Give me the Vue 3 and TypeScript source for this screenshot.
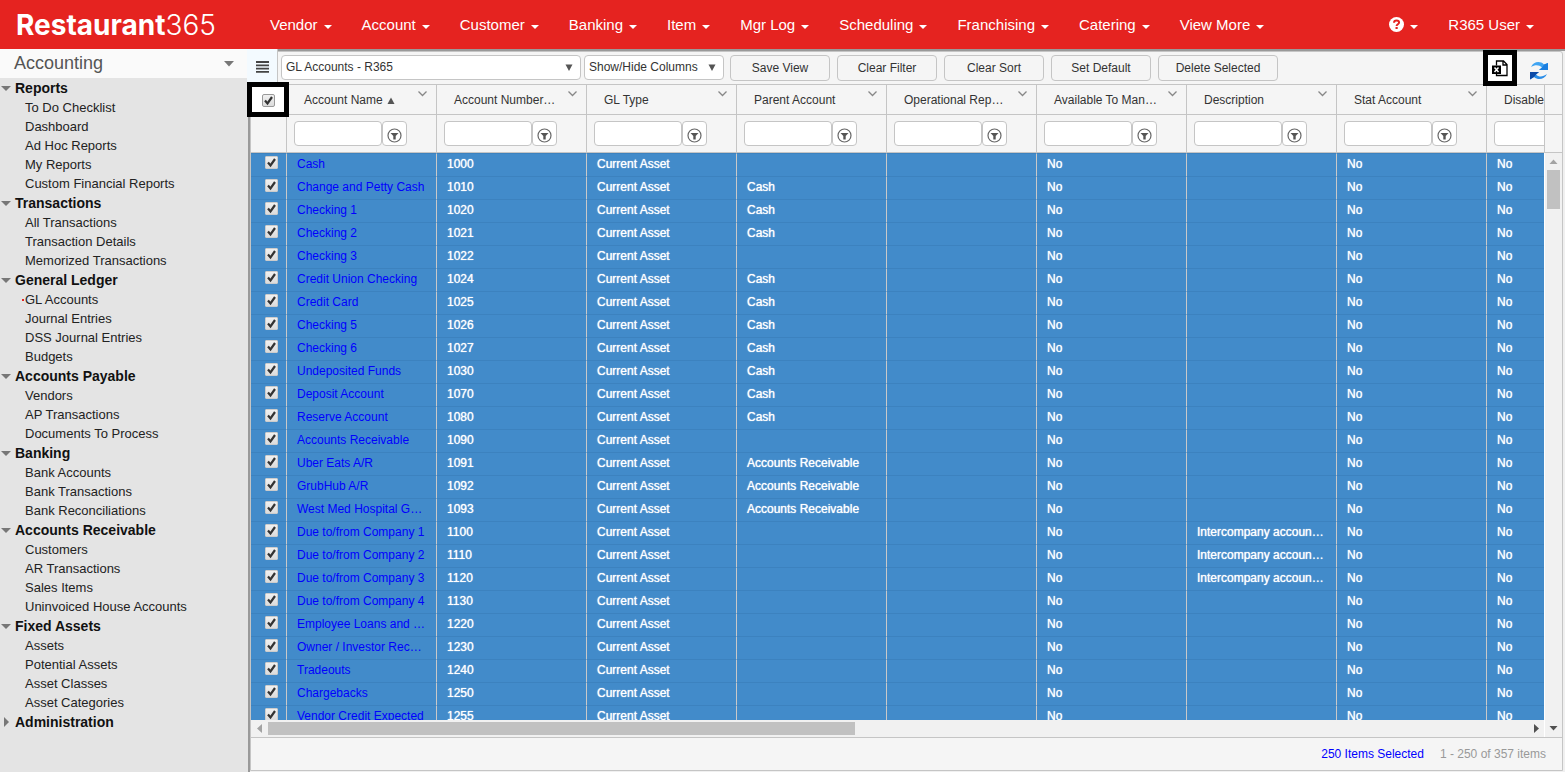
<script setup lang="ts">
import { ref } from 'vue'

interface Section {
  title: string
  open: boolean
  items: string[]
}

interface Account {
  name: string
  number: string
  parent: string
  description: string
  selected: boolean
}

const menus: string[] = ['Vendor', 'Account', 'Customer', 'Banking', 'Item', 'Mgr Log', 'Scheduling', 'Franchising', 'Catering', 'View More']

const sections = ref<Section[]>([
  { title: 'Reports', open: true, items: ['To Do Checklist', 'Dashboard', 'Ad Hoc Reports', 'My Reports', 'Custom Financial Reports'] },
  { title: 'Transactions', open: true, items: ['All Transactions', 'Transaction Details', 'Memorized Transactions'] },
  { title: 'General Ledger', open: true, items: ['GL Accounts', 'Journal Entries', 'DSS Journal Entries', 'Budgets'] },
  { title: 'Accounts Payable', open: true, items: ['Vendors', 'AP Transactions', 'Documents To Process'] },
  { title: 'Banking', open: true, items: ['Bank Accounts', 'Bank Transactions', 'Bank Reconciliations'] },
  { title: 'Accounts Receivable', open: true, items: ['Customers', 'AR Transactions', 'Sales Items', 'Uninvoiced House Accounts'] },
  { title: 'Fixed Assets', open: true, items: ['Assets', 'Potential Assets', 'Asset Classes', 'Asset Categories'] },
  { title: 'Administration', open: false, items: [] },
])
const current = 'GL Accounts'

const actions: string[] = ['Save View', 'Clear Filter', 'Clear Sort', 'Set Default', 'Delete Selected']

const columns: string[] = ['Account Name', 'Account Number…', 'GL Type', 'Parent Account', 'Operational Rep…', 'Available To Man…', 'Description', 'Stat Account', 'Disable']

const source: [string, string, string?, string?][] = [
  ['Cash', '1000'],
  ['Change and Petty Cash', '1010', 'Cash'],
  ['Checking 1', '1020', 'Cash'],
  ['Checking 2', '1021', 'Cash'],
  ['Checking 3', '1022'],
  ['Credit Union Checking', '1024', 'Cash'],
  ['Credit Card', '1025', 'Cash'],
  ['Checking 5', '1026', 'Cash'],
  ['Checking 6', '1027', 'Cash'],
  ['Undeposited Funds', '1030', 'Cash'],
  ['Deposit Account', '1070', 'Cash'],
  ['Reserve Account', '1080', 'Cash'],
  ['Accounts Receivable', '1090'],
  ['Uber Eats A/R', '1091', 'Accounts Receivable'],
  ['GrubHub A/R', '1092', 'Accounts Receivable'],
  ['West Med Hospital G…', '1093', 'Accounts Receivable'],
  ['Due to/from Company 1', '1100', '', 'Intercompany accoun…'],
  ['Due to/from Company 2', '1110', '', 'Intercompany accoun…'],
  ['Due to/from Company 3', '1120', '', 'Intercompany accoun…'],
  ['Due to/from Company 4', '1130'],
  ['Employee Loans and …', '1220'],
  ['Owner / Investor Rec…', '1230'],
  ['Tradeouts', '1240'],
  ['Chargebacks', '1250'],
  ['Vendor Credit Expected', '1255'],
]
const accounts = ref<Account[]>(
  source.map(([name, number, parent = '', description = '']) => ({ name, number, parent, description, selected: true })),
)
const allSelected = ref(true)
function toggleAll(): void {
  accounts.value.forEach((a) => (a.selected = allSelected.value))
}
</script>

<template>
  <div class="app">
    <header class="topbar">
      <a href="#" class="logo"><strong>Restaurant</strong><span>365</span></a>
      <nav class="menu">
        <a v-for="m in menus" :key="m" href="#">{{ m }}<i class="caret"></i></a>
      </nav>
      <nav class="menu user">
        <a href="#" aria-label="Help" class="help">
          <svg width="15" height="15" viewBox="0 0 15 15"><circle cx="7.500" cy="7.500" r="7.500" fill="#fff" /><path d="M5 5.800C5 4.100 6 3.400 7.500 3.400S10.100 4.200 10.100 5.500C10.100 7.200 7.600 7.300 7.600 9" fill="none" stroke="#e52320" stroke-width="2" /><path d="M6.500 10h2.200v2h-2.200z" fill="#e52320" /></svg>
          <i class="caret"></i>
        </a>
        <a href="#">R365 User<i class="caret"></i></a>
      </nav>
    </header>

    <div class="workspace">
      <aside class="sidebar">
        <button class="module" type="button">Accounting
          <svg width="10" height="6" viewBox="0 0 10 6"><path d="M0 0h10L5 5.500z" fill="#777" /></svg>
        </button>
        <section v-for="s in sections" :key="s.title">
          <button class="heading" type="button" :aria-expanded="s.open" @click="s.open = !s.open">
            <svg v-if="s.open" width="10" height="10" viewBox="0 0 10 10"><path d="M0 3h10L5 8z" fill="#777" /></svg>
            <svg v-else width="10" height="10" viewBox="0 0 10 10"><path d="M3 0v10l5-5z" fill="#777" /></svg>
            {{ s.title }}
          </button>
          <ul v-if="s.open && s.items.length">
            <li v-for="item in s.items" :key="item" :class="{ current: item === current }"><a href="#">{{ item }}</a></li>
          </ul>
        </section>
      </aside>

      <main class="main">
        <div class="panel">
          <div class="toolbar">
            <button class="toggle" type="button" aria-label="Toggle menu">
              <svg width="13" height="12" viewBox="0 0 13 12"><path d="M0 1h13M0 4.300h13M0 7.600h13M0 10.900h13" stroke="#444" stroke-width="1.800" /></svg>
            </button>
            <div class="combo view">
              <select aria-label="View"><option>GL Accounts - R365</option></select>
              <svg width="8" height="7" viewBox="0 0 8 7"><path d="M.5.500h7L4 7z" fill="#555" /></svg>
            </div>
            <div class="combo cols">
              <select aria-label="Columns"><option>Show/Hide Columns</option></select>
              <svg width="8" height="7" viewBox="0 0 8 7"><path d="M.5.500h7L4 7z" fill="#555" /></svg>
            </div>
            <div class="actions">
              <button v-for="a in actions" :key="a" type="button" :class="{ wide: a === 'Delete Selected' }">{{ a }}</button>
            </div>
            <div class="tools">
              <button class="export" type="button" aria-label="Export to Excel">
                <svg width="16" height="17" viewBox="0 0 16 17"><path d="M4.500 5.500V1h7l3.500 3.500V15.500H4.500V14M11 1v4h4" fill="none" stroke="#000" stroke-width="1.300" /><path d="M0 5.500h9v8.500H0z" fill="#000" /><path d="M2.500 7.500l4 4.500M6.500 7.500l-4 4.500" stroke="#fff" stroke-width="1.500" /></svg>
              </button>
              <button class="refresh" type="button" aria-label="Refresh">
                <svg width="20" height="20" viewBox="0 0 20 20">
                  <path d="M2 6C4.500.500 11-.500 15 3.500L19 2v7h-9l3-2.500C10 3.500 6 3.500 2 6z" fill="#3fa4f2" />
                  <path d="M15 3.500L19 2v7h-9l3-2.500z" fill="#1b7fe0" />
                  <path d="M18 13c-2.500 5.500-9 6.500-13 3L1 18.500V11h9l-3 2.500c3 3 7 2.500 11-.5z" fill="#2a8de8" />
                  <path d="M5 16l-4 2.500V11h9l-3 2.500z" fill="#0d4aa6" />
                </svg>
              </button>
            </div>
          </div>

          <div class="grid">
            <div class="viewport">
              <table>
                <colgroup><col class="c-check" /><col v-for="c in columns" :key="c" class="c-data" /></colgroup>
                <thead>
                  <tr class="titles">
                    <th scope="col">
                      <label class="check all"><input v-model="allSelected" type="checkbox" aria-label="Select all" @change="toggleAll" /><svg v-if="allSelected" width="13" height="13" viewBox="0 0 13 13"><path d="M3 6.500l2.500 3L10 3" /></svg></label>
                    </th>
                    <th v-for="(c, i) in columns" :key="c" scope="col">
                      <div class="title">
                        <span>{{ c }}</span>
                        <svg v-if="i === 0" width="8" height="9" viewBox="0 0 8 9"><path d="M.5 9h7L4 2.500z" fill="#555" /></svg>
                        <svg class="chev" width="9" height="6" viewBox="0 0 9 6"><path d="M.5.500l4 4 4-4" fill="none" stroke="#888" stroke-width="1.300" /></svg>
                      </div>
                    </th>
                  </tr>
                  <tr class="filters">
                    <th></th>
                    <th v-for="c in columns" :key="c">
                      <div class="filter">
                        <input type="text" :aria-label="'Filter ' + c" />
                        <button type="button" :aria-label="'Filter options ' + c">
                          <svg width="15" height="15" viewBox="0 0 15 15"><circle cx="7.500" cy="7.500" r="6.500" fill="none" stroke="#666" stroke-width="1.200" /><path d="M3.500 5h8L8.700 8v3.500H6.300V8z" fill="#555" /></svg>
                        </button>
                      </div>
                    </th>
                  </tr>
                </thead>
                <tbody>
                  <tr v-for="a in accounts" :key="a.number">
                    <td class="pick">
                      <label class="check"><input v-model="a.selected" type="checkbox" :aria-label="'Select ' + a.name" /><svg v-if="a.selected" width="13" height="13" viewBox="0 0 13 13"><path d="M3 6.500l2.500 3L10 3" /></svg></label>
                    </td>
                    <td><a href="#">{{ a.name }}</a></td>
                    <td>{{ a.number }}</td>
                    <td>Current Asset</td>
                    <td>{{ a.parent }}</td>
                    <td></td>
                    <td>No</td>
                    <td>{{ a.description }}</td>
                    <td>No</td>
                    <td>No</td>
                  </tr>
                </tbody>
              </table>
            </div>
            <div class="hbar">
              <svg width="17" height="17" viewBox="0 0 17 17"><path d="M11 4v9L6 8.500z" fill="#a3a3a3" /></svg>
              <div class="track"><div class="thumb"></div></div>
              <svg width="17" height="17" viewBox="0 0 17 17"><path d="M7 4v9l5-4.500z" fill="#505050" /></svg>
            </div>
            <div class="side">
              <div class="cap-title"></div>
              <div class="cap-filter"></div>
              <div class="vbar">
                <svg width="17" height="17" viewBox="0 0 17 17"><path d="M4.500 11h8l-4-4.500z" fill="#a3a3a3" /></svg>
                <div class="track"><div class="thumb"></div></div>
                <svg width="17" height="17" viewBox="0 0 17 17"><path d="M4.500 6h8l-4 4.500z" fill="#505050" /></svg>
              </div>
            </div>
          </div>

          <footer class="pager"><a href="#">250 Items Selected</a><span>1 - 250 of 357 items</span></footer>
        </div>
        <div class="mark mark-select"></div>
        <div class="mark mark-export"></div>
      </main>
    </div>
  </div>
</template>

<style>
body { margin: 0; }
</style>

<style scoped>
* { box-sizing: border-box; }
.app {
  display: flex;
  flex-direction: column;
  height: 100vh;
  overflow: hidden;
  font-family: "Liberation Sans", Arial, sans-serif;
  font-size: 12px;
  color: #333;
  background: #f5f5f5;
}
button, input, select { font: inherit; color: inherit; margin: 0; }
button { padding: 0; border: 0; background: none; cursor: pointer; }
a { text-decoration: none; color: inherit; }
svg { display: block; flex: none; }

.topbar {
  display: flex;
  align-items: center;
  flex: none;
  height: 49px;
  padding: 0 16px;
  background: #e52320;
  color: #fff;
}
.logo {
  flex: none;
  width: 239px;
  font-family: "Inter", sans-serif;
  font-size: 28px;
  line-height: 46px;
  white-space: nowrap;
}
.logo strong { font-weight: 700; }
.logo span { font-weight: 300; }
.menu { display: flex; font-size: 15px; line-height: 46px; white-space: nowrap; }
.menu a { display: flex; align-items: center; height: 46px; padding: 0 15px; }
.user { margin-left: auto; }
.caret {
  margin: 4px 0 0 6px;
  border: 4px solid transparent;
  border-top-color: #fff;
  border-bottom: 0;
}

.workspace { display: flex; flex: 1; min-height: 0; }
.sidebar { flex: none; width: 248px; background: #e4e4e4; overflow: hidden; }
.module {
  display: flex;
  align-items: center;
  justify-content: space-between;
  width: 100%;
  height: 29px;
  padding: 0 14px;
  background: #fafafa;
  font-size: 18px;
  color: #555;
}
.heading {
  display: flex;
  align-items: center;
  gap: 4px;
  width: 100%;
  height: 20px;
  padding-left: 1px;
  font-size: 14px;
  font-weight: 700;
  color: #111;
}
.sidebar ul { margin: 0; padding: 0; list-style: none; }
.sidebar li { padding-left: 25px; font-size: 13px; line-height: 19px; color: #222; }
.sidebar .current { position: relative; }
.current::before {
  content: "";
  position: absolute;
  left: 22px;
  top: 9px;
  width: 2px;
  height: 2px;
  background: #e52320;
}

.main {
  position: relative;
  flex: 1;
  display: flex;
  min-width: 0;
  border-left: 2px solid #999;
  border-top: 2px solid #999;
  padding: 0 2px 1px 0;
  background: #f0f0f0;
}
.panel {
  flex: 1;
  display: flex;
  flex-direction: column;
  min-width: 0;
  border: 1px solid #c5c5c5;
  border-radius: 0 3px 0 0;
  background: #f5f5f5;
}
.toolbar {
  display: flex;
  align-items: flex-start;
  flex: none;
  height: 33px;
  padding-top: 3px;
  border-bottom: 1px solid #c5c5c5;
}
.toggle {
  display: grid;
  place-items: center;
  flex: none;
  width: 31px;
  height: 35px;
  margin: -6px 3px 0 -4px;
  border-right: 1px solid #c5c5c5;
  background: #f3faff;
  z-index: 1;
}
.combo { position: relative; flex: none; }
.combo select {
  appearance: none;
  display: block;
  width: 100%;
  height: 25px;
  padding: 0 24px 2px 4px;
  border: 1px solid #c5c5c5;
  border-radius: 4px;
  background: #fff;
}
.combo svg { position: absolute; right: 8px; top: 9px; pointer-events: none; }
.view { width: 300px; margin-right: 3px; }
.cols { width: 140px; margin-right: 6px; }
.actions { display: flex; gap: 7px; }
.actions button {
  width: 100px;
  height: 26px;
  border: 1px solid #c5c5c5;
  border-radius: 4px;
  background: #f5f5f5;
}
.actions .wide { width: 120px; }
.tools { display: flex; gap: 17px; margin-left: auto; padding-right: 13px; }
.export { display: grid; place-items: center; width: 24px; height: 26px; background: #fff; }
.refresh { padding-top: 6px; }

.grid {
  flex: 1;
  display: grid;
  grid-template-columns: minmax(0, 1fr) 18px;
  grid-template-rows: minmax(0, 1fr) 17px;
  min-height: 0;
}
.viewport { overflow: hidden; }
table { table-layout: fixed; width: 1386px; border-collapse: separate; border-spacing: 0; }
.c-check { width: 36px; }
.c-data { width: 150px; }
th {
  padding: 0;
  border-right: 1px solid #c5c5c5;
  border-bottom: 1px solid #c5c5c5;
  font-weight: 400;
  text-align: left;
}
.titles th { height: 30px; }
.titles th:first-child { background: #fff; }
.filters th { height: 38px; }
.title { display: flex; align-items: center; gap: 4px; padding: 0 9px 0 17px; height: 29px; white-space: nowrap; }
.chev { margin: 0 0 11px auto; }
.filter { display: flex; padding-left: 7px; }
.filter input {
  width: 88px;
  height: 25px;
  border: 1px solid #c5c5c5;
  border-radius: 4px;
  background: #fff;
}
.filter button {
  display: grid;
  place-items: center;
  width: 25px;
  height: 25px;
  padding-top: 3px;
  border: 1px solid #c5c5c5;
  border-radius: 4px;
  background: #fff;
}
td {
  height: 23px;
  padding: 0 0 0 10px;
  border-right: 1px solid #c9c9c9;
  border-top: 1px solid #3c82bf;
  background: #428bca;
  color: #fff;
  line-height: 20px;
  text-shadow: 0 0 1px #fff;
  vertical-align: top;
  white-space: nowrap;
}
td a { color: #00f; text-shadow: none; }
.pick { padding: 2px 0 0 14px; }
.check { display: grid; width: 13px; height: 13px; }
.check.all { margin: 1px auto 0; }
.check input {
  grid-area: 1 / 1;
  appearance: none;
  width: 13px;
  height: 13px;
  border: 1px solid #ccc;
  border-radius: 1px;
  background: linear-gradient(#f0f0f0, #dcdcdc);
}
.check.all input { border-color: #999; border-radius: 2px; }
.check svg { grid-area: 1 / 1; z-index: 1; pointer-events: none; }
.check path { fill: none; stroke: #333; stroke-width: 2.200; }

.hbar { display: flex; grid-row: 2; background: #f1f1f1; }
.track { flex: 1; }
.hbar .thumb { width: 46.600%; height: 13px; margin-top: 2px; background: #c1c1c1; }
.side { grid-column: 2; grid-row: 1 / 3; display: flex; flex-direction: column; }
.cap-title, .cap-filter { flex: none; border-bottom: 1px solid #c5c5c5; border-left: 1px solid #c5c5c5; }
.cap-title { height: 30px; }
.cap-filter { height: 38px; }
.vbar { flex: 1; display: flex; flex-direction: column; border-left: 1px solid #fff; background: #f1f1f1; }
.vbar .thumb { width: 13px; height: 7%; margin-left: 2px; background: #c1c1c1; }

.pager {
  display: flex;
  align-items: center;
  justify-content: flex-end;
  gap: 16px;
  flex: none;
  height: 33px;
  padding-right: 16px;
  border-top: 1px solid #c5c5c5;
  color: #999;
}
.pager a { color: #00f; }

.mark { position: absolute; z-index: 2; border: 5px solid #000; pointer-events: none; }
.mark-select { left: -3px; top: 31px; width: 42px; height: 35px; }
.mark-export { right: 48px; top: -1px; width: 34px; height: 36px; }
</style>
